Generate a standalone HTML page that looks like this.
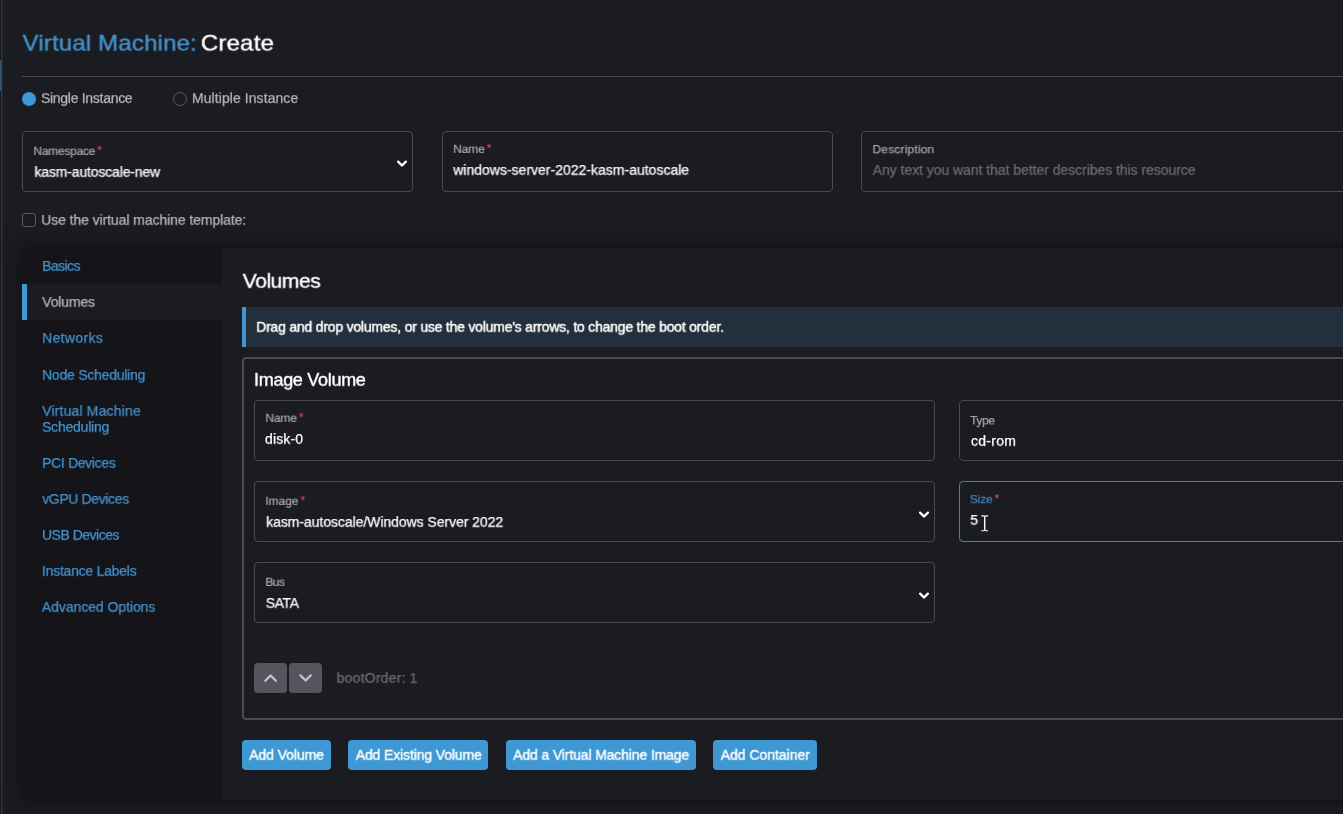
<!DOCTYPE html>
<html lang="en"><head><meta charset="utf-8"><title>Virtual Machine: Create</title>
<style>
*{box-sizing:border-box;margin:0;padding:0}
html,body{width:1343px;height:814px;overflow:hidden;background:#1b1c21;}
body{position:relative;font-family:"Liberation Sans",sans-serif;color:#b6b6c2;}
.t{position:absolute;white-space:nowrap;line-height:1;transform-origin:0 0;will-change:transform;-webkit-text-stroke:0.25px currentColor;}
.b{position:absolute;}
.fld{position:absolute;border:1px solid #4a4b52;border-radius:4px;background:#1b1c21;}
.btn{position:absolute;background:#3d98d3;border-radius:4px;height:30px;top:740px;}
svg{position:absolute;overflow:visible}
</style></head><body>
<!-- left window edge -->
<div class="b" style="left:0;top:0;width:1px;height:814px;background:#17181c"></div>
<div class="b" style="left:0;top:60px;width:1px;height:31px;background:#2b5878"></div>
<div class="b" style="left:1px;top:0;width:1px;height:814px;background:#37383e"></div>
<div class="b" style="left:1px;top:60px;width:1px;height:31px;background:#34454f"></div>
<div class="b" style="left:2px;top:0;width:1px;height:814px;background:#232429"></div>
<!-- header rule -->
<div class="b" style="left:22px;top:76px;width:1321px;height:1px;background:#4a4b52"></div>
<!-- radios -->
<div class="b" style="left:22px;top:92px;width:14px;height:14px;border-radius:50%;background:#3d98d3"></div>
<div class="b" style="left:173px;top:92px;width:14px;height:14px;border-radius:50%;border:1px solid #5a5b63;background:#1b1c21"></div>
<!-- top fields -->
<div class="fld" style="left:22px;top:131px;width:391px;height:61px"></div>
<svg style="left:396px;top:160px" width="12" height="8" viewBox="0 0 12 8"><path d="M2.1 1.6 L6 5.5 L9.9 1.6" fill="none" stroke="#fff" stroke-width="2.3" stroke-linecap="round" stroke-linejoin="round"/></svg>
<div class="fld" style="left:442px;top:131px;width:391px;height:61px"></div>
<div class="fld" style="left:861px;top:131px;width:500px;height:61px"></div>
<!-- checkbox -->
<div class="b" style="left:22px;top:213px;width:14px;height:14px;border-radius:3px;border:1px solid #5a5b63;background:#1b1c21"></div>
<!-- tab container -->
<div class="b" style="left:22px;top:248px;width:1340px;height:552px;background:#1b1c21;box-shadow:0 0 20px rgba(0,0,0,.5)"></div>
<div class="b" style="left:22px;top:248px;width:200px;height:552px;background:#141419"></div>
<div class="b" style="left:22px;top:284px;width:200px;height:36px;background:#1b1c21"></div>
<div class="b" style="left:22px;top:284px;width:5px;height:36px;background:#3d98d3"></div>
<!-- banner -->
<div class="b" style="left:242px;top:307px;width:1120px;height:40px;background:#22303d"></div>
<div class="b" style="left:242px;top:307px;width:4px;height:40px;background:#4596d0"></div>
<!-- infobox -->
<div class="b" style="left:242px;top:357px;width:1120px;height:363px;border:2px solid #4a4b52;border-radius:4px"></div>
<!-- inner fields -->
<div class="fld" style="left:254px;top:400px;width:681px;height:61px"></div>
<div class="fld" style="left:959px;top:400px;width:400px;height:61px"></div>
<div class="fld" style="left:254px;top:481px;width:681px;height:61px"></div>
<svg style="left:918px;top:511px" width="12" height="8" viewBox="0 0 12 8"><path d="M2.1 1.6 L6 5.5 L9.9 1.6" fill="none" stroke="#fff" stroke-width="2.3" stroke-linecap="round" stroke-linejoin="round"/></svg>
<div class="fld" style="left:959px;top:481px;width:400px;height:61px;border-color:#3a84b9"></div>
<div class="fld" style="left:254px;top:562px;width:681px;height:61px"></div>
<svg style="left:918px;top:592px" width="12" height="8" viewBox="0 0 12 8"><path d="M2.1 1.6 L6 5.5 L9.9 1.6" fill="none" stroke="#fff" stroke-width="2.3" stroke-linecap="round" stroke-linejoin="round"/></svg>
<!-- I-beam cursor -->
<svg style="left:980.6px;top:514.6px" width="8" height="17" viewBox="0 0 8 17"><path d="M0.3 0.9 H2.6 Q3.7 0.9 3.7 2 Q3.7 0.9 4.8 0.9 H7.1 M0.3 15.7 H2.6 Q3.7 15.7 3.7 14.6 Q3.7 15.7 4.8 15.7 H7.1" fill="none" stroke="#f4f4f4" stroke-width="1.1"/><path d="M3.7 1.6 V15" fill="none" stroke="#f8f8f8" stroke-width="1.5"/></svg>
<!-- up/down -->
<div class="b" style="left:254px;top:663px;width:33px;height:30px;border-radius:4px;background:#55565d"></div>
<div class="b" style="left:289px;top:663px;width:33px;height:30px;border-radius:4px;background:#55565d"></div>
<svg style="left:264px;top:673.6px" width="13.2" height="8" viewBox="0 0 13.2 8"><path d="M1.3 6.8 L6.6 1.5 L11.9 6.8" fill="none" stroke="#c6c6d2" stroke-width="2.2" stroke-linecap="round" stroke-linejoin="round"/></svg>
<svg style="left:299.4px;top:673.6px" width="13.2" height="8" viewBox="0 0 13.2 8"><path d="M1.3 1.3 L6.6 6.6 L11.9 1.3" fill="none" stroke="#c6c6d2" stroke-width="2.2" stroke-linecap="round" stroke-linejoin="round"/></svg>
<!-- buttons -->
<div class="btn" style="left:242px;width:89px"></div>
<div class="btn" style="left:348px;width:140px"></div>
<div class="btn" style="left:506px;width:190px"></div>
<div class="btn" style="left:713px;width:104px"></div>

<span class="t" id="title1" style="left:22px;top:32px;font-size:24px;color:#4493cf;letter-spacing:0.167px;transform:translate(0.51px,0.12px) scaleY(0.92);-webkit-text-stroke-width:0.4px;">Virtual Machine:</span>
<span class="t" id="title2" style="left:200px;top:32px;font-size:24px;color:#ffffff;letter-spacing:0.214px;transform:translate(0.76px,0.12px) scaleY(0.92);-webkit-text-stroke-width:0.4px;">Create</span>
<span class="t" id="r1" style="left:40px;top:91px;font-size:14px;color:#b6b6c2;letter-spacing:-0.292px;transform:translate(0.97px,0.27px) scaleY(0.97);">Single Instance</span>
<span class="t" id="r2" style="left:191px;top:91px;font-size:14px;color:#b6b6c2;letter-spacing:0.073px;transform:translate(0.88px,0.27px) scaleY(0.97);">Multiple Instance</span>
<span class="t" id="nsl" style="left:33px;top:145px;font-size:12px;color:#b6b6c2;letter-spacing:-0.256px;transform:translate(0.40px,0.80px) scaleY(0.92);-webkit-text-stroke-width:0.1px;">Namespace <span style="color:#ec4a5c;font-size:12px;position:relative;top:-1.2px;margin-left:-1.2px">*</span></span>
<span class="t" id="nsv" style="left:34px;top:165px;font-size:14px;color:#ffffff;letter-spacing:-0.158px;transform:translate(0.44px,0.07px) scaleY(0.97);">kasm-autoscale-new</span>
<span class="t" id="nml" style="left:453px;top:143px;font-size:12px;color:#b6b6c2;letter-spacing:-0.112px;transform:translate(0.20px,0.80px) scaleY(0.92);-webkit-text-stroke-width:0.1px;">Name <span style="color:#ec4a5c;font-size:12px;position:relative;top:-1.2px;margin-left:-1.2px">*</span></span>
<span class="t" id="nmv" style="left:453px;top:163px;font-size:14px;color:#ffffff;letter-spacing:0.002px;transform:translate(0.26px,0.07px) scaleY(0.97);">windows-server-2022-kasm-autoscale</span>
<span class="t" id="dl" style="left:872px;top:144px;font-size:12px;color:#b6b6c2;letter-spacing:0.174px;transform:translate(0.50px,0.10px) scaleY(0.92);-webkit-text-stroke-width:0.1px;">Description</span>
<span class="t" id="dv" style="left:872px;top:163px;font-size:14px;color:#6c6c76;letter-spacing:-0.048px;transform:translate(0.69px,0.07px) scaleY(0.97);">Any text you want that better describes this resource</span>
<span class="t" id="cb" style="left:41px;top:213px;font-size:14px;color:#b6b6c2;letter-spacing:-0.080px;transform:translate(0.15px,0.07px) scaleY(0.97);">Use the virtual machine template:</span>
<span class="t" id="t1" style="left:42px;top:259px;font-size:14px;color:#4493cf;letter-spacing:-0.557px;transform:translate(0.08px,0.07px) scaleY(0.97);">Basics</span>
<span class="t" id="t2" style="left:42px;top:295px;font-size:14px;color:#b6b6c2;letter-spacing:-0.149px;transform:translate(0.19px,0.07px) scaleY(0.97);">Volumes</span>
<span class="t" id="t3" style="left:42px;top:331px;font-size:14px;color:#4493cf;letter-spacing:0.346px;transform:translate(0.08px,0.07px) scaleY(0.97);">Networks</span>
<span class="t" id="t4" style="left:42px;top:368px;font-size:14px;color:#4493cf;letter-spacing:-0.236px;transform:translate(0.08px,0.07px) scaleY(0.97);">Node Scheduling</span>
<span class="t" id="t5a" style="left:42px;top:404px;font-size:14px;color:#4493cf;letter-spacing:0.159px;transform:translate(0.19px,0.07px) scaleY(0.97);">Virtual Machine</span>
<span class="t" id="t5b" style="left:41px;top:420px;font-size:14px;color:#4493cf;letter-spacing:-0.218px;transform:translate(0.97px,0.07px) scaleY(0.97);">Scheduling</span>
<span class="t" id="t6" style="left:42px;top:456px;font-size:14px;color:#4493cf;letter-spacing:-0.335px;transform:translate(0.08px,0.07px) scaleY(0.97);">PCI Devices</span>
<span class="t" id="t7" style="left:42px;top:492px;font-size:14px;color:#4493cf;letter-spacing:-0.376px;transform:translate(0.20px,0.07px) scaleY(0.97);">vGPU Devices</span>
<span class="t" id="t8" style="left:41px;top:528px;font-size:14px;color:#4493cf;letter-spacing:-0.504px;transform:translate(0.95px,0.07px) scaleY(0.97);">USB Devices</span>
<span class="t" id="t9" style="left:41px;top:564px;font-size:14px;color:#4493cf;letter-spacing:-0.242px;transform:translate(0.85px,0.07px) scaleY(0.97);">Instance Labels</span>
<span class="t" id="t10" style="left:41px;top:600px;font-size:14px;color:#4493cf;letter-spacing:-0.054px;transform:translate(0.79px,0.07px) scaleY(0.97);">Advanced Options</span>
<span class="t" id="h2" style="left:242px;top:270px;font-size:21px;color:#ffffff;letter-spacing:-0.440px;transform:translate(0.72px,0.24px) scaleY(0.97);-webkit-text-stroke-width:0.4px;">Volumes</span>
<span class="t" id="ban" style="left:256px;top:320px;font-size:14px;color:#ffffff;letter-spacing:-0.211px;transform:translate(0.17px,0.07px) scaleY(0.97);-webkit-text-stroke-width:0.45px;">Drag and drop volumes, or use the volume's arrows, to change the boot order.</span>
<span class="t" id="h3" style="left:253px;top:371px;font-size:18px;color:#ffffff;letter-spacing:-0.291px;transform:translate(0.97px,0.17px) scaleY(0.97);-webkit-text-stroke-width:0.4px;">Image Volume</span>
<span class="t" id="f1l" style="left:265px;top:412px;font-size:12px;color:#b6b6c2;letter-spacing:-0.112px;transform:translate(0.40px,0.80px) scaleY(0.92);-webkit-text-stroke-width:0.1px;">Name <span style="color:#ec4a5c;font-size:12px;position:relative;top:-1.2px;margin-left:-1.2px">*</span></span>
<span class="t" id="f1v" style="left:265px;top:432px;font-size:14px;color:#ffffff;letter-spacing:0.128px;transform:translate(0.00px,0.07px) scaleY(0.97);">disk-0</span>
<span class="t" id="f2l" style="left:970px;top:415px;font-size:12px;color:#b6b6c2;letter-spacing:-0.353px;transform:translate(0.13px,0.20px) scaleY(0.92);-webkit-text-stroke-width:0.1px;">Type</span>
<span class="t" id="f2v" style="left:970px;top:434px;font-size:14px;color:#ffffff;letter-spacing:0.256px;transform:translate(0.99px,0.07px) scaleY(0.97);">cd-rom</span>
<span class="t" id="f3l" style="left:265px;top:495px;font-size:12px;color:#b6b6c2;letter-spacing:-0.033px;transform:translate(0.27px,0.80px) scaleY(0.92);-webkit-text-stroke-width:0.1px;">Image <span style="color:#ec4a5c;font-size:12px;position:relative;top:-1.2px;margin-left:-1.2px">*</span></span>
<span class="t" id="f3v" style="left:266px;top:515px;font-size:14px;color:#ffffff;letter-spacing:-0.055px;transform:translate(0.14px,0.07px) scaleY(0.97);">kasm-autoscale/Windows Server 2022</span>
<span class="t" id="f4l" style="left:969px;top:494px;font-size:12px;color:#4493cf;letter-spacing:-0.139px;transform:translate(0.70px,0.00px) scaleY(0.92);-webkit-text-stroke-width:0.1px;"><span style="color:#4493cf">Size</span> <span style="color:#ec4a5c;font-size:12px;position:relative;top:-1.2px;margin-left:-1.2px">*</span></span>
<span class="t" id="f4v" style="left:970px;top:513px;font-size:14px;color:#ffffff;transform:translate(0.30px,0.07px) scaleY(0.97);">5</span>
<span class="t" id="f5l" style="left:265px;top:576px;font-size:12px;color:#b6b6c2;letter-spacing:-0.650px;transform:translate(0.40px,0.80px) scaleY(0.92);-webkit-text-stroke-width:0.1px;">Bus</span>
<span class="t" id="f5v" style="left:265px;top:596px;font-size:14px;color:#ffffff;letter-spacing:-0.406px;transform:translate(0.67px,0.07px) scaleY(0.97);">SATA</span>
<span class="t" id="bo" style="left:336px;top:671px;font-size:14px;color:#6c6c76;letter-spacing:0.205px;transform:translate(0.62px,0.07px) scaleY(0.97);">bootOrder: 1</span>
<span class="t" id="b1" style="left:249px;top:748px;font-size:14px;color:#ffffff;letter-spacing:-0.077px;transform:translate(0.24px,0.07px) scaleY(0.97);-webkit-text-stroke-width:0.4px;">Add Volume</span>
<span class="t" id="b2" style="left:355px;top:748px;font-size:14px;color:#ffffff;letter-spacing:-0.131px;transform:translate(0.74px,0.07px) scaleY(0.97);-webkit-text-stroke-width:0.4px;">Add Existing Volume</span>
<span class="t" id="b3" style="left:513px;top:748px;font-size:14px;color:#ffffff;letter-spacing:-0.134px;transform:translate(0.24px,0.07px) scaleY(0.97);-webkit-text-stroke-width:0.4px;">Add a Virtual Machine Image</span>
<span class="t" id="b4" style="left:720px;top:748px;font-size:14px;color:#ffffff;letter-spacing:-0.035px;transform:translate(0.74px,0.07px) scaleY(0.97);-webkit-text-stroke-width:0.4px;">Add Container</span>
</body></html>
